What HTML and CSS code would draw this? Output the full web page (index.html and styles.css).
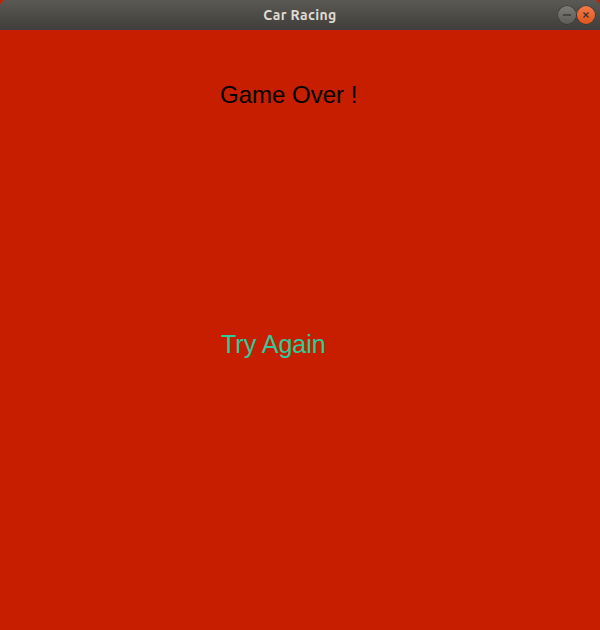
FILE: index.html
```html
<!DOCTYPE html>
<html>
<head>
<meta charset="utf-8">
<link rel="stylesheet" href="styles.css">
</head>
<body>
<div class="window">
  <div class="titlebar">
    <span class="title">Car Racing</span>
    <div class="controls">
      <span class="btn min"><svg width="18" height="18" viewBox="0 0 18 18"><line x1="5" y1="9" x2="13" y2="9" stroke="#35342f" stroke-width="1.3"/></svg></span>
      <span class="btn close"><svg width="18" height="18" viewBox="0 0 18 18"><path d="M6.5 6.5 L11.5 11.5 M11.5 6.5 L6.5 11.5" stroke="#35342f" stroke-width="1.3"/></svg></span>
    </div>
  </div>
  <div class="screen">
    <div class="over">Game Over !</div>
    <div class="again">Try Again</div>
  </div>
</div>
</body>
</html>
```
FILE: styles.css
```css
html, body { margin: 0; padding: 0; }
body { width: 600px; height: 630px; overflow: hidden; background: #c81e00; }
.window { display: flex; flex-direction: column; width: 600px; height: 630px; }
.titlebar {
  height: 30px; flex: none;
  background: linear-gradient(#5a5954, #3f3e3a);
  border-radius: 6px 6px 0 0;
  position: relative;
  display: flex; align-items: center; justify-content: center;
}
.title {
  font-family: "Ubuntu", "DejaVu Sans", sans-serif;
  font-weight: bold; font-size: 14px; letter-spacing: 0.4px; color: #dfdbd2;
}
.controls { position: absolute; right: 5px; top: 6px; display: flex; gap: 1px; }
.btn { width: 18px; height: 18px; border-radius: 50%; display: block; }
.btn svg { display: block; }
.min { background: linear-gradient(#7c7b76, #5d5c57); box-shadow: 0 0 0 0.5px #35342f; }
.close { background: linear-gradient(#f27a4a, #e0541d); box-shadow: 0 0 0 0.5px #35342f; }
.screen { flex: 1; background: #c81e00; position: relative; }
.over {
  font-family: "Liberation Sans", Arial, sans-serif; font-size: 24px; color: #000;
  padding: 51px 0 0 220px; line-height: 28px;
}
.again {
  font-family: "Liberation Sans", Arial, sans-serif; font-size: 25px; color: #2ecc9a;
  padding: 221px 0 0 221px; line-height: 28px;
}
```
